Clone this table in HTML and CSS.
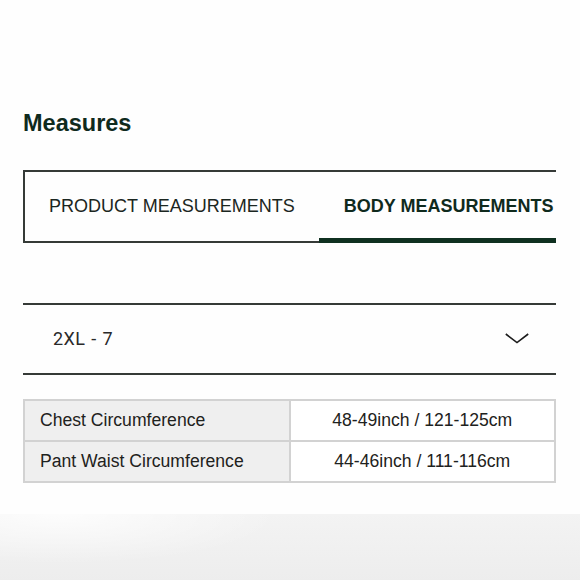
FILE: index.html
```html
<!DOCTYPE html>
<html lang="en">
<head>
<meta charset="utf-8">
<title>Measures</title>
<link rel="stylesheet" href="styles.css">
</head>
<body>
<main class="page">
  <h2 class="title">Measures</h2>
  <div class="tabs">
    <div class="tab">PRODUCT MEASUREMENTS</div>
    <div class="tab tab-active">BODY MEASUREMENTS</div>
  </div>
  <div class="select">
    <span class="select-value">2XL - 7</span>
    <svg class="chevron" width="24" height="11" viewBox="0 0 24 11" aria-hidden="true">
      <polyline points="0.8,1 12,9.6 23.2,1" fill="none" stroke="#1c1c1c" stroke-width="1.6" stroke-linejoin="miter"/>
    </svg>
  </div>
  <table class="measures">
    <tr>
      <th>Chest Circumference</th>
      <td>48-49inch / 121-125cm</td>
    </tr>
    <tr>
      <th>Pant Waist Circumference</th>
      <td>44-46inch / 111-116cm</td>
    </tr>
  </table>
</main>
<div class="footer-shade"></div>
</body>
</html>
```
FILE: styles.css
```css
html, body {
  margin: 0;
  padding: 0;
  background: #fefefe;
}
body {
  width: 580px;
  height: 580px;
  overflow: hidden;
  font-family: "Liberation Sans", Arial, sans-serif;
}
.page {
  padding: 112px 24px 0 23px;
}
.title {
  margin: 0;
  font-size: 23.5px;
  line-height: 1;
  font-weight: 700;
  color: #0f2a1d;
}
.tabs {
  margin-top: 34px;
  display: flex;
  height: 71px;
  border-top: 2px solid #353a37;
  border-left: 2px solid #353a37;
  overflow: hidden;
}
.tab {
  flex: none;
  display: flex;
  align-items: center;
  padding: 0 24px;
  font-size: 18px;
  color: #1b2621;
  border-bottom: 2px solid #353a37;
  box-sizing: border-box;
}
.tab-active {
  font-weight: 700;
  color: #0f2a1d;
  border-bottom: 5px solid #0f3020;
  padding-top: 3px;
  padding-left: 25px;
}
.select {
  margin-top: 60px;
  height: 68px;
  display: flex;
  align-items: center;
  justify-content: space-between;
  padding: 0 27px 0 30px;
  border-top: 2px solid #353a37;
  border-bottom: 2px solid #353a37;
}
.select-value {
  font-family: Roboto, "Liberation Sans", sans-serif;
  font-size: 18px;
  letter-spacing: 0.4px;
  word-spacing: 1px;
  color: #2a2a2a;
}
.chevron {
  display: block;
}
.measures {
  margin-top: 24px;
  width: 100%;
  border-collapse: collapse;
  table-layout: fixed;
  border: 2px solid #d2d2d2;
}
.measures th,
.measures td {
  border: 2px solid #d2d2d2;
  height: 39px;
  padding: 0;
  font-size: 17.6px;
  font-weight: 400;
  color: #1e2220;
}
.measures th {
  text-align: left;
  padding-left: 15px;
  background: #efefef;
}
.measures td {
  text-align: center;
  background: #ffffff;
}
.footer-shade {
  margin-top: 31px;
  height: 80px;
  background:
    radial-gradient(ellipse 220px 50px at 60px 0, rgba(255,255,255,0.8), rgba(255,255,255,0)),
    linear-gradient(to bottom, #f3f3f3, #ececec);
}
```
